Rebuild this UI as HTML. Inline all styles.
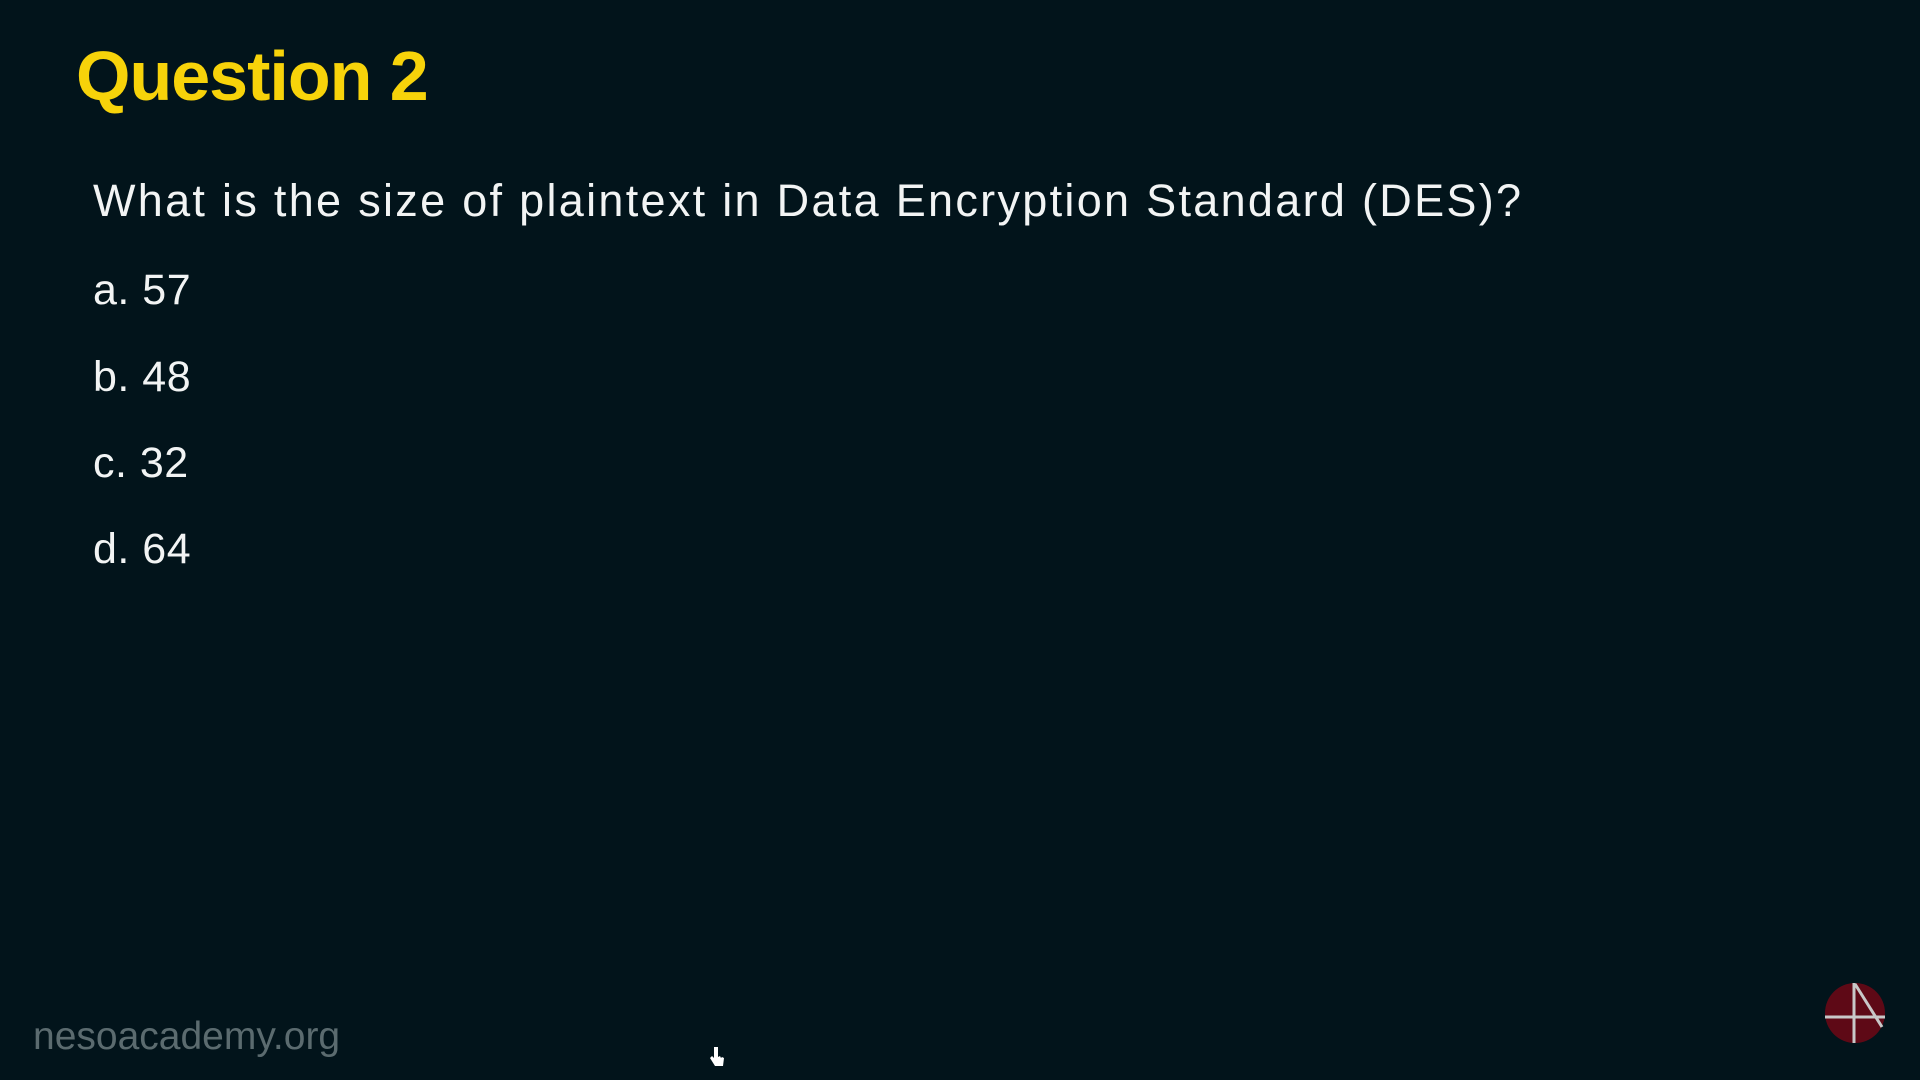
<!DOCTYPE html>
<html><head><meta charset="utf-8"><style>
html,body{margin:0;padding:0}
body{width:1920px;height:1080px;background:#02141b;position:relative;overflow:hidden;font-family:"Liberation Sans",sans-serif}
.t{position:absolute;white-space:nowrap}
#title{left:76px;top:36px;font-size:70px;color:#f7d30a;font-weight:bold;letter-spacing:-1px}
#q{left:93px;top:175px;font-size:45px;color:#f2f4f4;letter-spacing:2.3px}
.o{left:93px;font-size:43px;color:#f2f4f4;letter-spacing:0.5px}
#foot{left:33px;top:1015px;font-size:39px;color:#5b6b6f;letter-spacing:0px}
</style></head><body>
<div class="t" id="title">Question 2</div>
<div class="t" id="q">What is the size of plaintext in Data Encryption Standard (DES)?</div>
<div class="t o" style="top:266px">a. 57</div>
<div class="t o" style="top:353px">b. 48</div>
<div class="t o" style="top:439px">c. 32</div>
<div class="t o" style="top:525px">d. 64</div>
<div class="t" id="foot">nesoacademy.org</div>
<svg style="position:absolute;left:1824px;top:982px" width="62" height="62" viewBox="0 0 62 62">
<circle cx="31" cy="31" r="30" fill="#5e0916"/>
<line x1="30" y1="1" x2="30" y2="61" stroke="#c8c8c8" stroke-width="3"/>
<line x1="1" y1="35" x2="61" y2="35" stroke="#c8c8c8" stroke-width="3"/>
<line x1="31" y1="2" x2="58" y2="45" stroke="#c8c8c8" stroke-width="3"/>
</svg>
<svg style="position:absolute;left:709px;top:1046px" width="16" height="22" viewBox="0 0 16 22">
<path d="M5 1v11l-2-2-2 2 5 8h8l1-8-2-1-1 1-1-2-2 1V1z" fill="#fff"/>
</svg>
</body></html>
